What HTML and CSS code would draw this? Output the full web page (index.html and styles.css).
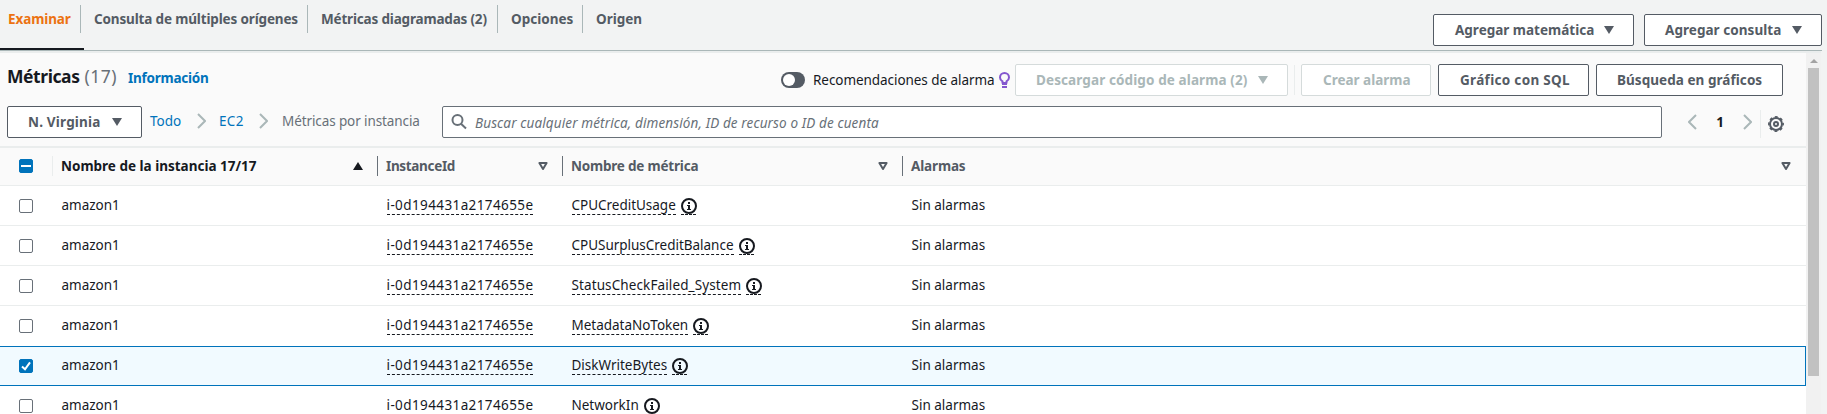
FILE: index.html
```html
<!DOCTYPE html>
<html lang="es">
<head>
<meta charset="utf-8">
<title>Métricas</title>
<link rel="stylesheet" href="styles.css">
</head>
<body>
<svg class="defs" width="0" height="0">
  <symbol id="down" viewBox="0 0 10 8"><path d="M0 0h10L5 8z" fill="currentColor"/></symbol>
  <symbol id="filter" viewBox="0 0 10 8"><path d="M1.4 1h7.2L5 6.9z" fill="none" stroke="currentColor" stroke-width="2" stroke-linejoin="round"/></symbol>
  <symbol id="next" viewBox="0 0 9 16"><path d="M1 1l7 7-7 7" fill="none" stroke="currentColor" stroke-width="2"/></symbol>
  <symbol id="info" viewBox="0 0 16 16"><circle cx="8" cy="8" r="7" fill="none" stroke="currentColor" stroke-width="2"/><path d="M7 4h2v2H7zM6 7h3v4h1v1H6v-1h1V8H6z" fill="currentColor"/></symbol>
</svg>
<header class="top">
  <nav class="tabs">
    <a class="tab active">Examinar</a>
    <a class="tab w-con"><span class="t-con">Consulta de múltiples orígenes</span></a>
    <a class="tab w-dia"><span class="t-dia">Métricas diagramadas (2)</span></a>
    <a class="tab w-opc">Opciones</a>
    <a class="tab last">Origen</a>
  </nav>
  <div class="top-actions">
    <button class="btn w-mat"><span>Agregar matemática</span><svg class="tri"><use href="#down"/></svg></button>
    <button class="btn w-cta"><span class="t-cta">Agregar consulta</span><svg class="tri"><use href="#down"/></svg></button>
  </div>
</header>
<div class="body">
  <main class="panel">
    <section class="title-row">
      <h1><span class="t-met">Métricas</span> <span class="count">(17)</span></h1>
      <a class="info-link">Información</a>
      <div class="title-actions">
        <span class="toggle"></span>
        <span class="rec">Recomendaciones de alarma</span>
        <svg class="bulb" viewBox="0 0 11 16"><path d="M3.5 11V9.300C2 8.400 1 7.200 1 5.400a4.500 4.400 0 0 1 9 0c0 1.800-1 3-2.500 3.900V11z" fill="none" stroke="currentColor" stroke-width="2" stroke-linejoin="round"/><path d="M3 11h5v2H3zM3 14h5v2H3z" fill="currentColor"/></svg>
        <button class="btn off w-des"><span class="t-des">Descargar código de alarma (2)</span><svg class="tri"><use href="#down"/></svg></button>
        <span class="rule"></span>
        <button class="btn off w-cre">Crear alarma</button>
        <button class="btn w-sql"><span class="t-sql">Gráfico con SQL</span></button>
        <button class="btn w-bus"><span class="t-bus">Búsqueda en gráficos</span></button>
      </div>
    </section>
    <section class="filter-row">
      <button class="btn w-vir"><span class="t-vir">N. Virginia</span><svg class="tri"><use href="#down"/></svg></button>
      <div class="crumbs">
        <a class="c-todo">Todo</a><svg class="chev"><use href="#next"/></svg>
        <a class="c-ec2">EC2</a><svg class="chev"><use href="#next"/></svg>
        <span class="c-last">Métricas por instancia</span>
      </div>
      <div class="search">
        <svg class="glass" viewBox="0 0 16 16"><circle cx="6.500" cy="6" r="5" fill="none" stroke="currentColor" stroke-width="2"/><path d="M10 9.800l5 4.700" stroke="currentColor" stroke-width="2"/></svg>
        <span class="t-sea">Buscar cualquier métrica, dimensión, ID de recurso o ID de cuenta</span>
      </div>
      <div class="pager">
        <svg class="chev flip"><use href="#next"/></svg><b>1</b><svg class="chev"><use href="#next"/></svg>
        <span class="rule short"></span>
        <svg class="gear" viewBox="0 0 16 16" fill="none" stroke="currentColor"><circle cx="8" cy="8" r="6" stroke-width="2"/><circle cx="8" cy="8" r="7.200" stroke-width="1.500" stroke-dasharray="2.900 2.755" stroke-dashoffset="1.450"/><circle cx="8" cy="8" r="2" stroke-width="2"/></svg>
      </div>
    </section>
    <div class="row head">
      <div class="cell sel"><span class="box mixed"></span></div>
      <div class="cell sorted"><span>Nombre de la instancia 17/17</span><svg class="tri up"><use href="#down"/></svg></div>
      <div class="cell"><span class="t-iid">InstanceId</span><svg class="tri"><use href="#filter"/></svg></div>
      <div class="cell"><span class="t-nme">Nombre de métrica</span><svg class="tri"><use href="#filter"/></svg></div>
      <div class="cell"><span class="t-ala">Alarmas</span><svg class="tri"><use href="#filter"/></svg></div>
    </div>
    <div id="rows"></div>
  </main>
  <div class="scroll"><span class="arrow"></span><span class="thumb"></span></div>
</div>
<script src="rows.js"></script>
</body>
</html>
```
FILE: styles.css
```css
* { box-sizing: border-box; }
body { margin: 0; height: 414px; overflow: hidden; background: #f2f3f3; color: #16191f; font: 13.5px/20px "Noto Sans", sans-serif; }
.defs { position: absolute; }
svg { flex: none; display: block; }

/* Top tabs */
.top { display: flex; justify-content: space-between; width: 1822px; height: 51px; border-bottom: 1px solid #aab7b8; }
.tabs { display: flex; height: 50px; font-weight: 700; color: #545b64; }
.tab { position: relative; height: 50px; padding: 9px 0 0 13px; white-space: nowrap; }
.tab::after { content: ""; position: absolute; right: 0; top: 5px; width: 1px; height: 28px; background: #aab7b8; }
.tab.last::after { display: none; }
.tab.active { width: 84px; padding-left: 8px; color: #ec7211; border-bottom: 2px solid #16191f; letter-spacing: -.1px; }
.tab.active::after { right: 3px; }
.w-con { width: 224px; padding-left: 10px; }
.w-dia { width: 190px; }
.w-opc { width: 85px; }
.top-actions { display: flex; gap: 10px; padding-top: 14px; }

/* Buttons */
.btn { display: flex; align-items: center; justify-content: space-between; height: 32px; padding: 0 19px 0 21px; background: #fff; border: 1px solid #545b64; border-radius: 2px; color: #545b64; font: 700 13.5px/20px "Noto Sans", sans-serif; white-space: nowrap; }
.btn.off { border-color: #d5dbdb; color: #aab7b8; }
.tri { width: 10px; height: 8px; }
.up { transform: scaleY(-1); }
.w-mat { width: 201px; }
.w-cta { width: 178px; padding-left: 20px; }
.w-des { width: 273px; margin-left: 5px; padding-left: 20px; }
.w-cre { width: 130px; margin-left: 6px; }
.w-sql { width: 151px; margin-left: 7px; }
.w-bus { width: 187px; margin-left: 7px; padding-left: 20px; }
.w-vir { width: 135px; padding-left: 20px; }

/* Tracking */
.t-con { letter-spacing: -.15px; }
.t-dia { letter-spacing: -.18px; }
.t-cta { letter-spacing: .05px; }
.t-met { letter-spacing: -.42px; }
.t-des { letter-spacing: .11px; }
.t-sql { letter-spacing: .32px; }
.t-bus { letter-spacing: .05px; }
.t-vir { letter-spacing: .19px; }
.t-sea { letter-spacing: .12px; padding-top: 1px; }
.t-iid { letter-spacing: -.33px; }
.t-nme { letter-spacing: -.2px; }
.t-ala { letter-spacing: -.15px; }
.t-id { letter-spacing: .395px; }
.m0, .m1, .m3 { letter-spacing: -.02px; }
.m2 { letter-spacing: .11px; }

/* Panel */
.body { display: flex; height: 363px; width: 1821px; border-top: 2px solid #eaeded; }
.panel { width: 1806px; background: #fafafa; }
.title-row { display: flex; height: 53px; padding: 11px 23px 0 7px; }
h1 { display: flex; gap: 5px; margin: 0; font-size: 17.5px; line-height: 25px; white-space: nowrap; width: 121px; }
.count { font-weight: 400; color: #687078; letter-spacing: .5px; }
.info-link { padding-top: 4px; font-weight: 700; color: #0073bb; letter-spacing: -.25px; }
.title-actions { display: flex; align-items: center; height: 32px; margin-left: auto; }
.toggle { width: 24px; height: 16px; border-radius: 8px; background: #545b64; display: flex; padding: 2px; }
.toggle::before { content: ""; width: 12px; height: 12px; border-radius: 6px; background: #fff; }
.rec { width: 186px; padding-left: 8px; white-space: nowrap; letter-spacing: -.06px; }
.bulb { width: 11px; height: 16px; color: #8456ce; margin-left: 8px; }
.rule { width: 1px; height: 30px; margin-left: 6px; background: #eaeded; }
.filter-row { display: flex; height: 40px; padding-left: 7px; }
.crumbs { display: flex; height: 30px; width: 300px; align-items: center; color: #0073bb; white-space: nowrap; }
.chev { width: 9px; height: 16px; color: #aab7b8; }
.c-todo { width: 55px; padding-left: 8px; }
.c-ec2 { width: 53px; padding-left: 13px; letter-spacing: .3px; }
.c-last { padding-left: 14px; color: #687078; letter-spacing: -.1px; }
.search { display: flex; align-items: center; width: 1220px; height: 32px; border: 1px solid #687078; border-radius: 2px; background: #fff; color: #687078; font-style: italic; white-space: nowrap; }
.glass { width: 16px; height: 16px; margin: 0 8px 0 8px; }
.pager { display: flex; height: 32px; align-items: center; padding-left: 26px; color: #16191f; }
.flip { transform: scaleX(-1); }
.pager b { width: 46px; text-align: center; }
.rule.short { height: 28px; margin: 4px 7px 0 8px; }
.gear { width: 16px; height: 16px; margin-top: 4px; color: #545b64; }

/* Table */
.row { display: grid; grid-template-columns: 52px 325px 185px 340px 904px; height: 40px; padding-bottom: 1px; border-bottom: 1px solid #eaeded; background: #fff; align-items: center; }
.cell { display: flex; align-items: center; padding-left: 9.5px; white-space: nowrap; }
.cell.sel { padding-left: 19px; margin-top: 2px; }
.head { border-top: 2px solid #eaeded; background: #fafafa; color: #545b64; font-weight: 700; }
.head .cell { height: 20px; justify-content: space-between; padding: 0 14px 0 8px; border-left: 1px solid #687078; }
.head .cell:last-child { padding-right: 15px; }
.head .cell.sel { border: 0; padding-left: 19px; margin-top: 0; }
.head .sorted { border-left-color: #eaeded; color: #16191f; }
.box { display: flex; width: 14px; height: 14px; border: 1px solid #687078; border-radius: 2px; background: #fff; }
.box.mixed, .box.on { border-color: #0073bb; background: #0073bb; align-items: center; justify-content: center; }
.box.mixed::after { content: ""; width: 10px; height: 2px; background: #fff; }
.before { border-bottom-color: #fff; }
.picked { border-bottom-color: #0073bb; background: #f1faff; box-shadow: inset 0 1px #0073bb, inset -1px 0 #0073bb; }
.dash { border-bottom: 1px dashed #16191f; height: 19px; line-height: 18px; margin-top: 1px; }
.ico { margin-left: 5px; width: 15px; }
.ico svg { width: 16px; height: 16px; margin-top: 2px; }

/* Scrollbar */
.scroll { width: 15px; background: #f1f1f1; padding: 6px 2px 0; display: flex; flex-direction: column; align-items: center; }
.arrow { border: 4px solid transparent; border-top: 0; border-bottom-color: #a3a3a3; height: 4px; margin-bottom: 5px; }
.thumb { width: 11px; height: 308px; background: #c1c1c1; }
```
FILE: rows.js
```js
const metrics = ['CPUCreditUsage', 'CPUSurplusCreditBalance', 'StatusCheckFailed_System', 'MetadataNoToken', 'DiskWriteBytes', 'NetworkIn'];
const picked = 4;
const check = '<svg width="12" height="12" viewBox="0 0 12 12"><path d="M2 6.500l3 2.800 5-7" fill="none" stroke="#fff" stroke-width="2"/></svg>';
document.getElementById('rows').innerHTML = metrics.map((m, i) => `
<div class="row${i === picked ? ' picked' : i === picked - 1 ? ' before' : ''}">
  <div class="cell sel"><span class="box${i === picked ? ' on' : ''}">${i === picked ? check : ''}</span></div>
  <div class="cell">amazon1</div>
  <div class="cell"><span class="dash t-id">i-0d194431a2174655e</span></div>
  <div class="cell"><span class="dash m${i}">${m}</span><span class="dash ico"><svg><use href="#info"/></svg></span></div>
  <div class="cell">Sin alarmas</div>
</div>`).join('');
```
